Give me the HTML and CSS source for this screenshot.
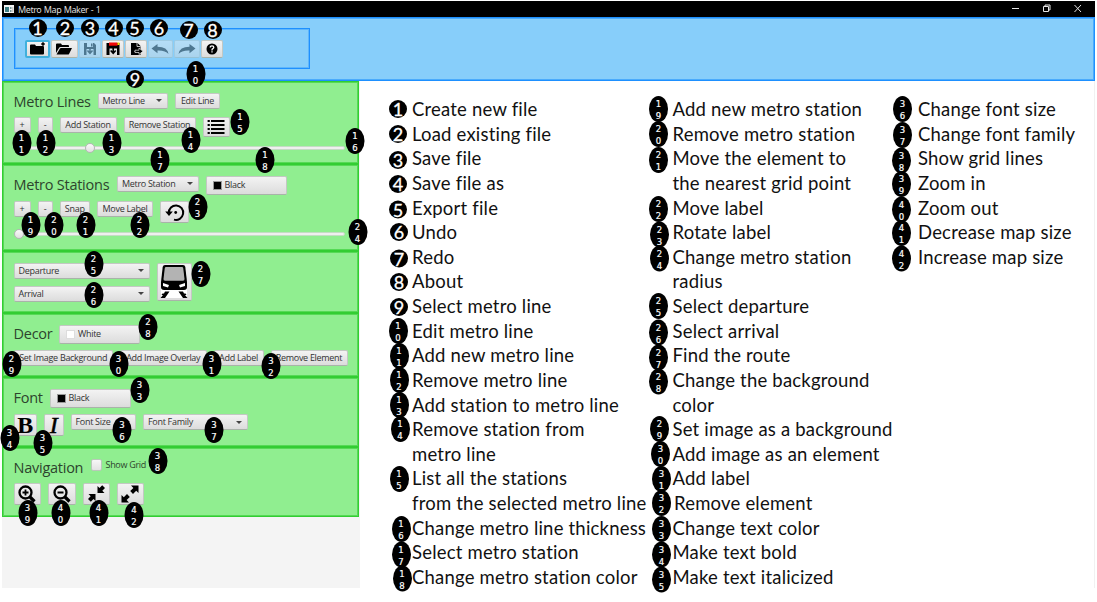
FILE: index.html
```html
<!DOCTYPE html>
<html lang="en">
<head>
<meta charset="utf-8">
<title>Metro Map Maker - 1</title>
<link rel="stylesheet" href="styles.css">
</head>
<body>
<div class="window">
  <header class="titlebar">
    <svg class="app-icon" width="10" height="8" viewBox="0 0 10 8"><rect width="10" height="8" fill="#f4f4f4"/><rect x="1" y="2" width="4" height="5" fill="#3d7f86"/><rect x="6" y="2" width="1.5" height="2" fill="#7a9a9c"/><rect x="6" y="5" width="1.5" height="2" fill="#7a9a9c"/><rect x="8.3" y="2" width="1" height="5" fill="#bbb"/></svg>
    <span class="title">Metro Map Maker - 1</span>
    <svg class="win-buttons" width="76" height="12" viewBox="0 0 76 12" fill="none" stroke="#e6e6e6"><path d="M3 6.500h7"/><path d="M34.500 4.500h5v5h-5zM36 4.500v-1.500h5v5h-1.500"/><path d="M65.500 3l6.500 7M72 3l-6.500 7"/></svg>
  </header>
  <div class="toolbar-area">
    <div class="toolbar">
      <button class="btn tool w25 focused"><svg width="17" height="14" viewBox="0 0 17 14"><path d="M1 3.500q0-1 1-1h4l1 1.500h7q1 0 1 1v6.500q0 1-1 1H2q-1 0-1-1z"/><path d="M12.200 2h3.600M14 .2v3.600" stroke="#000" stroke-width="1.600"/></svg></button>
      <button class="btn tool w27"><svg width="18" height="14" viewBox="0 0 18 14"><path d="M1 11V2.500q0-1 1-1h4l1 1.500h6q1 0 1 1v1H5.500q-1 0-1.500 1z"/><path d="M1.500 12.500L5 6.500q.3-.6 1-.6h11l-3 6q-.3.600-1 .6z"/></svg></button>
      <button class="btn tool w22 off"><svg width="14" height="14" viewBox="0 0 14 14"><path d="M1 1h10l2 2v10h-2.500V7H3.500v6H1zM4 1v4h6V1z" fill-rule="evenodd"/><path d="M7 6v5M4.500 8.500L7 11.300 9.500 8.500" fill="none" stroke="#000" stroke-width="1.500"/><rect x="8" y="1.500" width="1.500" height="3"/></svg></button>
      <button class="btn tool w22"><svg width="14" height="14" viewBox="0 0 14 14"><path d="M.5 1h13v12H11V6.500H3.500V13h-3z"/><rect x="3" y=".5" width="8.500" height="3.200" fill="#f00808"/><rect x="11.500" y=".5" width="2" height="2.500" fill="#ffd800"/><path d="M7.200 6v5M4.700 8.500l2.500 2.800 2.500-2.800" fill="none" stroke="#000" stroke-width="1.600"/></svg></button>
      <button class="btn tool w22"><svg width="14" height="14" viewBox="0 0 14 14"><path d="M2 1h6.500l3 3v9H2z"/><path d="M8 1v3.500h3.500M5.500 9.500h3" stroke="#eee" stroke-width=".8" fill="none"/><path d="M6 8.200h4V6l4 3.300-4 3.200v-2H6z" stroke="#eee" stroke-width=".7"/></svg></button>
      <button class="btn tool w26 off"><svg width="18" height="12" viewBox="0 0 18 12"><path d="M.5 5.500L6.500 1v2.700q10 0 11 7.300-3-3.800-11-3.500v2.700z"/></svg></button>
      <button class="btn tool w26 off"><svg width="18" height="12" viewBox="0 0 18 12"><path d="M17.500 5.500L11.500 1v2.700q-10 0-11 7.300 3-3.800 11-3.500v2.700z"/></svg></button>
      <button class="btn tool w22"><svg width="12" height="12" viewBox="0 0 12 12"><circle cx="6" cy="6" r="5.500"/><path d="M4.200 4.600q0-1.800 1.800-1.800t1.800 1.500q0 .8-.9 1.300T6 7v.4M6 8.200v1.400" fill="none" stroke="#fff" stroke-width="1.300"/></svg></button>
    </div>
  </div>

  <main class="content">
    <aside class="sidebar">
      <section class="panel lines">
        <div class="row head"><h2 class="t76">Metro Lines</h2><button class="btn combo w70">Metro Line</button><button class="btn w45">Edit Line</button></div>
        <div class="row"><button class="btn w17">+</button><button class="btn w15">-</button><button class="btn w57">Add Station</button><button class="btn w72">Remove Station</button>
          <button class="btn w27 h20"><svg width="18" height="16" viewBox="0 0 18 16" stroke="#000" stroke-width="2" fill="none"><path d="M4 2H17.500M4 6H17.500M4 10H17.500M4 14H17.500M.6 2h2.200M.6 6h2.200M.6 10h2.200M.6 14h2.200"/></svg></button></div>
        <div class="slider"><span class="thumb mid"></span></div>
      </section>

      <section class="panel stations">
        <div class="row head"><h2 class="t96">Metro Stations</h2><button class="btn combo w81">Metro Station</button><button class="btn picker"><i class="swatch"></i>Black</button></div>
        <div class="row"><button class="btn w17">+</button><button class="btn w15">-</button><button class="btn w30">Snap</button><button class="btn w56">Move Label</button>
          <button class="btn w29 h22"><svg width="20" height="19" viewBox="0 0 20 19"><path d="M3.800 10A7.200 7.200 0 1 1 9 16.600" fill="none" stroke="#000" stroke-width="2"/><path d="M.2 8.500h7.600L4 13z"/><circle cx="10.700" cy="9.500" r="1.400"/></svg></button></div>
        <div class="slider"><span class="thumb"></span></div>
      </section>

      <section class="panel route">
        <div class="stack"><button class="btn combo w136">Departure</button><button class="btn combo w136">Arrival</button></div>
        <button class="btn w35 h38"><svg width="28" height="35" viewBox="0 0 28 35"><path d="M1 25h26v9H1z" fill="#fff"/><path d="M5 1h18q2 0 2.300 2L27 18v5q0 3-3 3H4q-3 0-3-3v-5L2.700 3Q3 1 5 1z"/><path d="M6 3h16q1 0 1.200 1l1.300 11q.2 1.800-1.500 1.800H5q-1.700 0-1.500-1.800L4.800 4Q5 3 6 3z" fill="#b3b3b3"/><path d="M3 19l6 2-1 2.500-5-1.500zM25 19l-6 2 1 2.500 5-1.500z" fill="#fff"/><path d="M5 27.500h4.500L5 34H.5L3 31H1.500l1-1.500H4zM23 27.500h-4.500L23 34h4.500L25 31h1.500l-1-1.500H24z"/></svg></button>
      </section>

      <section class="panel decor">
        <div class="row head"><h2 class="t38">Decor</h2><button class="btn picker"><i class="swatch white"></i>White</button></div>
        <div class="row"><button class="btn w99">Set Image Background</button><button class="btn w86">Add Image Overlay</button><button class="btn w50">Add Label</button><button class="btn w77">Remove Element</button></div>
      </section>

      <section class="panel font">
        <div class="row head"><h2 class="t29">Font</h2><button class="btn picker"><i class="swatch"></i>Black</button></div>
        <div class="row"><button class="btn w23 h22 glyph bold">B</button><button class="btn w20 h22 glyph italic">I</button><button class="btn combo w65">Font Size</button><button class="btn combo w105">Font Family</button></div>
      </section>

      <section class="panel nav">
        <div class="row head"><h2 class="t70">Navigation</h2><label class="check"><i class="box"></i>Show Grid</label></div>
        <div class="row"><button class="btn w27 h22"><svg width="18" height="18" viewBox="0 0 18 18" fill="none" stroke="#000"><circle cx="7.500" cy="7.500" r="6" stroke-width="2.300"/><path d="M12 12l4.500 4.500" stroke-width="3.200"/><path d="M4.500 7.500h6M7.500 4.500v6" stroke-width="1.800"/></svg></button>
          <button class="btn w28 h22"><svg width="18" height="18" viewBox="0 0 18 18" fill="none" stroke="#000"><circle cx="7.500" cy="7.500" r="6" stroke-width="2.300"/><path d="M12 12l4.500 4.500" stroke-width="3.200"/><path d="M4.500 7.500h6" stroke-width="2"/></svg></button>
          <button class="btn w27 h22"><svg width="17" height="17" viewBox="0 0 17 17"><path d="M9.500 1l0 7 7 0-2.200-2.200 2.700-2.900L14.200.2l-2.700 2.700zM7.500 16l0-7-7 0 2.200 2.200L0 14.100l2.800 2.700 2.700-2.700z"/></svg></button>
          <button class="btn w27 h22"><svg width="18" height="18" viewBox="0 0 18 18"><path d="M10 .5h7.500V8l-2.300-2.300-3.200 3.200L9.200 6.100l3.200-3.200zM8 17.500H.5V10l2.300 2.300L6 9.100l2.800 2.800-3.200 3.200z"/></svg></button></div>
      </section>
    </aside>

    <div class="legend">
      <ol class="col c1">
        <li><b class="dot">1</b>Create new file</li>
        <li><b class="dot">2</b>Load existing file</li>
        <li><b class="dot d1">3</b>Save file</li>
        <li><b class="dot d1">4</b>Save file as</li>
        <li><b class="dot d2">5</b>Export file</li>
        <li><b class="dot r1">6</b>Undo</li>
        <li><b class="dot r1 d2">7</b>Redo</li>
        <li><b class="dot r1">8</b>About</li>
        <li><b class="dot r1 d1">9</b>Select metro line</li>
        <li><b class="oval">1<br>0</b>Edit metro line</li>
        <li><b class="oval r1">1<br>1</b>Add new metro line</li>
        <li><b class="oval r1">1<br>2</b>Remove metro line</li>
        <li><b class="oval r1">1<br>3</b>Add station to metro line</li>
        <li><b class="oval r2">1<br>4</b>Remove station from</li>
        <li class="cont">metro line</li>
        <li><b class="oval r1">1<br>5</b>List all the stations</li>
        <li class="cont">from the selected metro line</li>
        <li><b class="oval r3 d1">1<br>6</b>Change metro line thickness</li>
        <li><b class="oval r3 d2">1<br>7</b>Select metro station</li>
        <li><b class="oval r4 d2">1<br>8</b>Change metro station color</li>
      </ol>
      <ol class="col c2">
        <li><b class="oval">1<br>9</b>Add new metro station</li>
        <li><b class="oval">2<br>0</b>Remove metro station</li>
        <li><b class="oval d1">2<br>1</b>Move the element to</li>
        <li class="cont">the nearest grid point</li>
        <li><b class="oval d1">2<br>2</b>Move label</li>
        <li><b class="oval r1 d3">2<br>3</b>Rotate label</li>
        <li><b class="oval r1 d2">2<br>4</b>Change metro station</li>
        <li class="cont">radius</li>
        <li><b class="oval">2<br>5</b>Select departure</li>
        <li><b class="oval d2">2<br>6</b>Select arrival</li>
        <li><b class="oval d2">2<br>7</b>Find the route</li>
        <li><b class="oval d2">2<br>8</b>Change the background</li>
        <li class="cont">color</li>
        <li><b class="oval r1">2<br>9</b>Set image as a background</li>
        <li><b class="oval r2">3<br>0</b>Add image as an element</li>
        <li><b class="oval r3">3<br>1</b>Add label</li>
        <li><b class="oval r3">3<br>2</b><span class="inset">Remove element</span></li>
        <li><b class="oval r3 d1">3<br>3</b>Change text color</li>
        <li><b class="oval r3 d2">3<br>4</b>Make text bold</li>
        <li><b class="oval r3 d3">3<br>5</b>Make text italicized</li>
      </ol>
      <ol class="col c3">
        <li><b class="oval r1">3<br>6</b>Change font size</li>
        <li><b class="oval r1 d1">3<br>7</b>Change font family</li>
        <li><b class="oval d2">3<br>8</b>Show grid lines</li>
        <li><b class="oval d1">3<br>9</b>Zoom in</li>
        <li><b class="oval d2">4<br>0</b>Zoom out</li>
        <li><b class="oval d1">4<br>1</b>Decrease map size</li>
        <li><b class="oval d2">4<br>2</b>Increase map size</li>
      </ol>
    </div>
  </main>

  <div class="pins">
    <b class="dot p1">1</b><b class="dot p2">2</b><b class="dot p3">3</b><b class="dot p4">4</b><b class="dot p5">5</b><b class="dot p6">6</b><b class="dot p7">7</b><b class="dot p8">8</b><b class="dot p9">9</b>
    <b class="oval p10">1<br>0</b><b class="oval p11">1<br>1</b><b class="oval p12">1<br>2</b><b class="oval p13">1<br>3</b><b class="oval p14">1<br>4</b><b class="oval p15">1<br>5</b><b class="oval p16">1<br>6</b><b class="oval p17">1<br>7</b><b class="oval p18">1<br>8</b><b class="oval p19">1<br>9</b>
    <b class="oval p20">2<br>0</b><b class="oval p21">2<br>1</b><b class="oval p22">2<br>2</b><b class="oval p23">2<br>3</b><b class="oval p24">2<br>4</b><b class="oval p25">2<br>5</b><b class="oval p26">2<br>6</b><b class="oval p27">2<br>7</b><b class="oval p28">2<br>8</b><b class="oval p29">2<br>9</b>
    <b class="oval p30">3<br>0</b><b class="oval p31">3<br>1</b><b class="oval p32">3<br>2</b><b class="oval p33">3<br>3</b><b class="oval p34">3<br>4</b><b class="oval p35">3<br>5</b><b class="oval p36">3<br>6</b><b class="oval p37">3<br>7</b><b class="oval p38">3<br>8</b><b class="oval p39">3<br>9</b>
    <b class="oval p40">4<br>0</b><b class="oval p41">4<br>1</b><b class="oval p42">4<br>2</b>
  </div>
</div>
</body>
</html>
```
FILE: styles.css
```css
* { box-sizing: border-box; }
body { margin: 0; background: #fff; font-family: "Open Sans", "Noto Sans", sans-serif; }
.window { position: relative; width: 1097px; height: 602px; padding: 1px 2px 0; overflow: hidden; }

.titlebar { display: flex; align-items: center; height: 16px; background: #000; padding-left: 2px; }
.title { margin-left: 4px; font: 9px/15px "Noto Sans", sans-serif; color: #ddd; flex: 1; letter-spacing: -0.42px; word-spacing: 0.5px; }
.win-buttons { margin-right: 10px; margin-bottom: 2px; }

.toolbar-area { height: 64px; padding: 10px 11px; background: #87cefa; border: 1px solid #1e90ff; box-shadow: inset 0 0 0 1px #4aabfc; }
.toolbar { display: flex; align-items: flex-start; gap: 1px; width: 296px; height: 41px; padding: 11px 10px; border: 1px solid #1e90ff; box-shadow: inset 0 0 0 1px #5fb6fb; }

.btn { display: flex; align-items: center; justify-content: center; flex: none; height: 16px; margin: 0; padding: 0; border: 1px solid #c3c8c3; border-bottom-color: #a9b3a9; border-radius: 2px; background: linear-gradient(#f3f3f3, #dcdcdc); color: #333; font: 9px/12px "Open Sans", sans-serif; letter-spacing: -0.3px; white-space: nowrap; }
.tool { height: 18px; }
.btn svg { flex: none; }
.focused { border: 2px solid #3fb0dc; }
.off { opacity: .42; }
.combo { justify-content: space-between; padding: 0 5px 0 4px; }
.combo::after { content: ""; border: 3px solid transparent; border-top: 3px solid #444; border-bottom: 0; }
.picker { width: 81px; height: 19px; justify-content: flex-start; padding-left: 6px; }
.swatch { width: 9px; height: 9px; margin-right: 3px; background: #000; border: 0.5px solid #999; }
.white { background: #fff; border-color: #ddd; }

.w15 { width: 15px; } .w17 { width: 17px; } .w20 { width: 20px; } .w22 { width: 22.200px; } .w23 { width: 23px; }
.w25 { width: 25px; } .w26 { width: 25.700px; } .w27 { width: 27px; } .w28 { width: 28px; } .w29 { width: 29px; }
.toolbar .w27 { width: 26.500px; }
.toolbar .w22 { width: 22px; }
.w30 { width: 30.500px; } .w35 { width: 35.500px; } .w45 { width: 45px; } .w50 { width: 50px; } .w56 { width: 56px; }
.w57 { width: 57px; } .w65 { width: 65.500px; } .w70 { width: 70.500px; } .w72 { width: 72px; } .w77 { width: 77px; }
.w81 { width: 81.500px; } .w86 { width: 86.500px; } .w99 { width: 99.500px; } .w105 { width: 105px; } .w136 { width: 136px; }
.h20 { height: 20px; } .h22 { height: 22px; } .h38 { height: 38.500px; }

.content { display: flex; height: 507px; }
.sidebar { width: 358px; background: #f4f4f4; flex: none; }
.panel { width: 357px; padding: 10.600px 11px 0 10.500px; background: #90ee90; border: 1px solid #32cd32; box-shadow: inset 0 0 0 1px #55da55; }
.lines { height: 83px; } .stations { height: 87px; } .route { height: 62px; display: flex; gap: 7px; }
.decor { height: 64px; } .font { height: 70px; } .nav { height: 70px; }
.row { display: flex; align-items: flex-start; gap: 7px; }
.head { height: 24.500px; }
.stations .head, .font .head { height: 25.500px; }
.decor .head { height: 25px; }
.nav .head { height: 24px; }
.stack { display: flex; flex-direction: column; gap: 7px; }
h2 { margin: 0; font: 14.500px/17px "Open Sans", sans-serif; letter-spacing: -0.25px; color: #2d442d; white-space: nowrap; }
.t76 { width: 77px; } .t96 { width: 96.500px; } .t38 { width: 38.500px; } .t29 { width: 29px; } .t70 { width: 70px; }
.slider { width: 331px; height: 4px; margin-top: 9px; border: 1px solid #c4dcc4; border-radius: 2px; background: #efefef; display: flex; align-items: center; }
.thumb { width: 10px; height: 10px; flex: none; border-radius: 50%; background: linear-gradient(#fafafa, #e0e0e0); border: 1px solid #b5b5b5; margin-left: -1px; }
.mid { margin-left: 70.500px; }
.glyph { color: #000; font: 24px/20px "Liberation Serif", serif; }
.bold { font-weight: bold; }
.italic { font-style: italic; -webkit-text-stroke: .5px #000; }
.check { display: flex; align-items: center; gap: 4px; height: 12px; font: 9px/12px "Open Sans", sans-serif; letter-spacing: -0.3px; color: #2d442d; }
.box { width: 11px; height: 12px; background: linear-gradient(#f7f7f7, #e2e2e2); border: 1px solid #b9c9b9; border-radius: 2px; }

.dot, .oval { display: flex; flex: none; justify-content: center; background: #000; color: #fff; border-radius: 50%; text-align: center; font-weight: normal; letter-spacing: 0; }
.dot { width: 18px; height: 18px; font: 18px/18px Lato, sans-serif; -webkit-text-stroke: .3px #fff; }
.oval { display: block; width: 19px; height: 26px; padding-top: 2px; font: 8.500px/12px "DejaVu Sans", sans-serif; -webkit-text-stroke: .2px #fff; }

.legend { position: relative; flex: 1; border-right: 1px solid #f1f1f1; display: flex; padding: 16px 0 0 28px; }
.col { list-style: none; margin: 0; padding: 0; font: 18.500px/24.630px Lato, sans-serif; letter-spacing: 0.2px; font-variant-ligatures: none; color: #111; }
.c1 { width: 260.500px; } .c2 { width: 243px; }
.col li { display: flex; align-items: center; height: 24.630px; padding-left: 24px; white-space: nowrap; }
.c3 li { padding-left: 26.500px; }
.col li b { margin-left: -23px; margin-right: 5px; }
.col li .oval { margin-left: -23.500px; margin-right: 4.500px; }
.c3 li .oval { margin-left: -26px; margin-right: 7px; }
.inset { padding-left: 1.500px; }
.col .r1 { --x: 1px; } .col .r2 { --x: 2px; } .col .r3 { --x: 3px; } .col .r4 { --x: 4px; }
.col .d1 { --y: 1px; } .col .d2 { --y: 1.500px; } .col .d3 { --y: 2.500px; }
.col b { transform: translate(var(--x, 0), var(--y, 0)); }

/* Numbered callouts floating over the controls, placed by centre point */
.pins b { position: absolute; transform: translate(-50%, -50%); }
.p1 { left: 37.500px; top: 28px; } .p2 { left: 65px; top: 28px; } .p3 { left: 90px; top: 28px; }
.p4 { left: 113.500px; top: 28px; } .p5 { left: 134.500px; top: 28px; } .p6 { left: 159px; top: 28px; }
.p7 { left: 188.500px; top: 29.500px; } .p8 { left: 212.500px; top: 29.500px; } .p9 { left: 135px; top: 78.500px; }
.p10 { left: 195.500px; top: 74px; } .p11 { left: 21.500px; top: 143px; } .p12 { left: 45.500px; top: 143px; }
.p13 { left: 111.500px; top: 143px; } .p14 { left: 190.500px; top: 140px; } .p15 { left: 240px; top: 122px; }
.p16 { left: 355px; top: 141px; } .p17 { left: 160px; top: 160px; } .p18 { left: 265px; top: 160px; }
.p19 { left: 30.500px; top: 225px; } .p20 { left: 54px; top: 225px; } .p21 { left: 85.500px; top: 225px; }
.p22 { left: 139.500px; top: 225px; } .p23 { left: 197.500px; top: 207px; } .p24 { left: 357.500px; top: 232px; }
.p25 { left: 93.500px; top: 264px; } .p26 { left: 93.500px; top: 295px; } .p27 { left: 200.500px; top: 274px; }
.p28 { left: 148px; top: 327px; } .p29 { left: 11.500px; top: 364px; } .p30 { left: 118.500px; top: 364px; }
.p31 { left: 211.500px; top: 364px; } .p32 { left: 271px; top: 366px; } .p33 { left: 139.500px; top: 390px; }
.p34 { left: 9.500px; top: 438px; } .p35 { left: 42.500px; top: 443px; } .p36 { left: 122px; top: 430px; }
.p37 { left: 214px; top: 430px; } .p38 { left: 157.500px; top: 461px; } .p39 { left: 27.500px; top: 513px; }
.p40 { left: 60.500px; top: 513px; } .p41 { left: 98.500px; top: 513px; } .p42 { left: 134px; top: 515px; }
```
